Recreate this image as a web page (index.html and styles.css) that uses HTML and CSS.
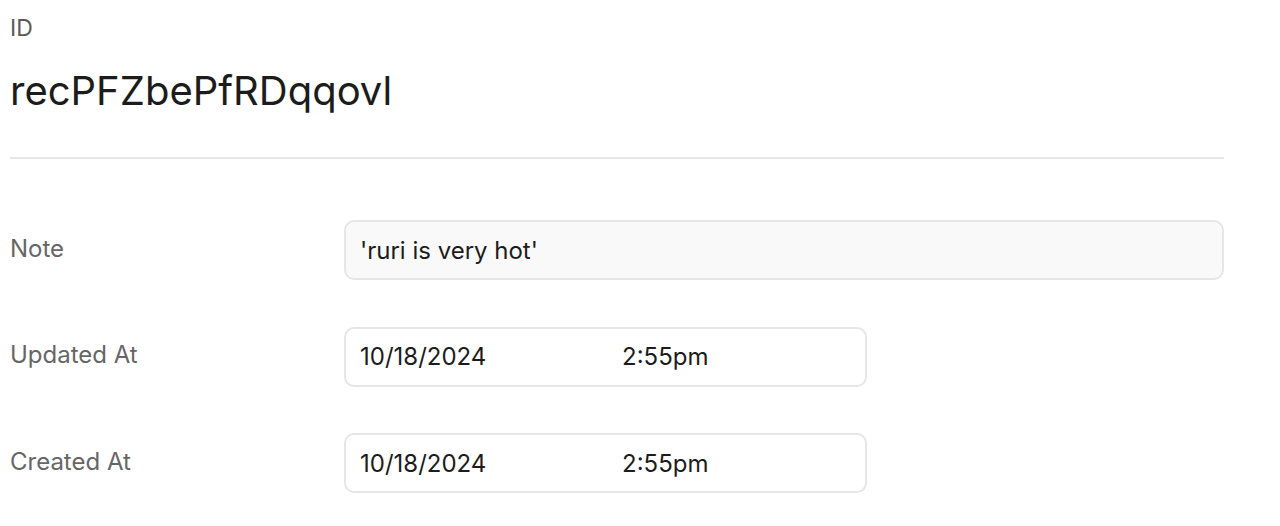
FILE: index.html
```html
<!DOCTYPE html>
<html lang="en">
<head>
<meta charset="utf-8">
<title>Record</title>
<link rel="stylesheet" href="styles.css">
</head>
<body>
<main class="record">
  <header class="record-head">
    <div class="id-label">ID</div>
    <h1 class="record-id">recPFZbePfRDqqovl</h1>
  </header>
  <hr class="divider">
  <section class="fields">
    <div class="field">
      <div class="field-label">Note</div>
      <div class="field-box note-box">'ruri is very hot'</div>
    </div>
    <div class="field">
      <div class="field-label">Updated At</div>
      <div class="field-box date-box">
        <span class="date">10/18/2024</span>
        <span class="time">2:55pm</span>
      </div>
    </div>
    <div class="field">
      <div class="field-label">Created At</div>
      <div class="field-box date-box">
        <span class="date">10/18/2024</span>
        <span class="time">2:55pm</span>
      </div>
    </div>
  </section>
</main>
</body>
</html>
```

FILE: styles.css
```css
* { box-sizing: border-box; }

html, body {
  margin: 0;
  padding: 0;
  background: #ffffff;
}

body {
  font-family: Inter, Roboto, "Liberation Sans", Arial, sans-serif;
  color: #1f1f1f;
}

.record {
  width: 1224px;
  padding: 13px 0 0 10px;
}

.id-label {
  font-size: 23px;
  line-height: 30px;
  color: #5a5a5a;
}

.record-id {
  margin: 24px 0 0;
  font-family: Inter, "Liberation Sans", Arial, sans-serif;
  font-weight: 400;
  font-size: 40px;
  line-height: 48px;
  letter-spacing: 0;
  color: #1c1c1c;
}

.divider {
  margin: 42px 0 0;
  border: 0;
  height: 2px;
  background: #e6e6e6;
}

.fields {
  display: flex;
  flex-direction: column;
  gap: 46.5px;
  padding-top: 61px;
}

.field {
  display: grid;
  grid-template-columns: 334px 1fr;
  align-items: center;
}

.field-label {
  font-size: 24px;
  color: #666666;
  padding-bottom: 4px;
}

.field-box {
  height: 60px;
  border: 2px solid #e6e6e6;
  border-radius: 10px;
  padding: 0 14px;
  display: flex;
  align-items: center;
  font-size: 24px;
  color: #1c1c1c;
}

.note-box {
  background: #f9f9f9;
}

.date-box {
  width: 523px;
  background: #ffffff;
}

.date {
  width: 262px;
}
```
